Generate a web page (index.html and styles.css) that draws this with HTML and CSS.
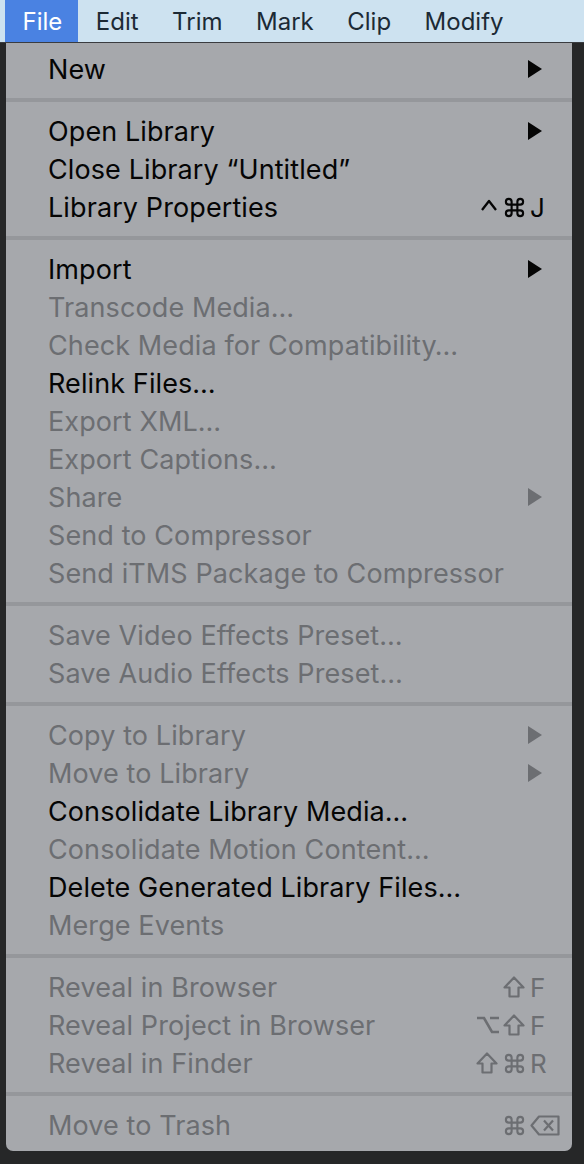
FILE: index.html
```html
<!DOCTYPE html>
<html>
<head>
<meta charset="utf-8">
<link rel="stylesheet" href="styles.css">
</head>
<body>
<div class="menubar">
  <span class="mb-item active">File</span>
  <span class="mb-item">Edit</span>
  <span class="mb-item">Trim</span>
  <span class="mb-item">Mark</span>
  <span class="mb-item">Clip</span>
  <span class="mb-item">Modify</span>
</div>
<div class="stage">
  <div class="menu">
    <div class="row"><span class="label">New</span><span class="sub"></span></div>
    <div class="sep"></div>
    <div class="row"><span class="label">Open Library</span><span class="sub"></span></div>
    <div class="row"><span class="label">Close Library “Untitled”</span></div>
    <div class="row"><span class="label">Library Properties</span>
      <span class="keys">
        <span class="k"><svg class="ic ctl" viewBox="0 0 18 14"><path d="M2 12 L9 3 L16 12"/></svg></span>
        <span class="k"><svg class="ic cmd" viewBox="0 0 24 24"><path d="M15 6v12a3 3 0 1 0 3-3H6a3 3 0 1 0 3 3V6a3 3 0 1 0-3 3h12a3 3 0 1 0-3-3"/></svg></span>
        <span class="k letter">J</span>
      </span>
    </div>
    <div class="sep"></div>
    <div class="row"><span class="label">Import</span><span class="sub"></span></div>
    <div class="row off"><span class="label">Transcode Media…</span></div>
    <div class="row off"><span class="label">Check Media for Compatibility…</span></div>
    <div class="row"><span class="label">Relink Files…</span></div>
    <div class="row off"><span class="label">Export XML…</span></div>
    <div class="row off"><span class="label">Export Captions…</span></div>
    <div class="row off"><span class="label">Share</span><span class="sub"></span></div>
    <div class="row off"><span class="label">Send to Compressor</span></div>
    <div class="row off"><span class="label">Send iTMS Package to Compressor</span></div>
    <div class="sep"></div>
    <div class="row off"><span class="label">Save Video Effects Preset…</span></div>
    <div class="row off"><span class="label">Save Audio Effects Preset…</span></div>
    <div class="sep"></div>
    <div class="row off"><span class="label">Copy to Library</span><span class="sub"></span></div>
    <div class="row off"><span class="label">Move to Library</span><span class="sub"></span></div>
    <div class="row"><span class="label">Consolidate Library Media…</span></div>
    <div class="row off"><span class="label">Consolidate Motion Content…</span></div>
    <div class="row"><span class="label">Delete Generated Library Files…</span></div>
    <div class="row off"><span class="label">Merge Events</span></div>
    <div class="sep"></div>
    <div class="row off"><span class="label">Reveal in Browser</span>
      <span class="keys">
        <span class="k"><svg class="ic shift" viewBox="0 0 22 22"><path d="M11 1.5 L20.5 11.5 H15.5 V20.5 H6.5 V11.5 H1.5 Z"/></svg></span>
        <span class="k letter">F</span>
      </span>
    </div>
    <div class="row off"><span class="label">Reveal Project in Browser</span>
      <span class="keys">
        <span class="k"><svg class="ic opt" viewBox="0 0 24 20"><path d="M1 3 H8 L16 17 H23 M14 3 H23"/></svg></span>
        <span class="k"><svg class="ic shift" viewBox="0 0 22 22"><path d="M11 1.5 L20.5 11.5 H15.5 V20.5 H6.5 V11.5 H1.5 Z"/></svg></span>
        <span class="k letter">F</span>
      </span>
    </div>
    <div class="row off"><span class="label">Reveal in Finder</span>
      <span class="keys">
        <span class="k"><svg class="ic shift" viewBox="0 0 22 22"><path d="M11 1.5 L20.5 11.5 H15.5 V20.5 H6.5 V11.5 H1.5 Z"/></svg></span>
        <span class="k"><svg class="ic cmd" viewBox="0 0 24 24"><path d="M15 6v12a3 3 0 1 0 3-3H6a3 3 0 1 0 3 3V6a3 3 0 1 0-3 3h12a3 3 0 1 0-3-3"/></svg></span>
        <span class="k letter">R</span>
      </span>
    </div>
    <div class="sep"></div>
    <div class="row off"><span class="label">Move to Trash</span>
      <span class="keys">
        <span class="k"><svg class="ic cmd" viewBox="0 0 24 24"><path d="M15 6v12a3 3 0 1 0 3-3H6a3 3 0 1 0 3 3V6a3 3 0 1 0-3 3h12a3 3 0 1 0-3-3"/></svg></span>
        <span class="k letter"><svg class="ic del" viewBox="0 0 30 21"><path d="M9 1.5 H28.5 V19.5 H9 L1.5 10.5 Z M14 5.5 L23 15.5 M23 5.5 L14 15.5"/></svg></span>
      </span>
    </div>
  </div>
</div>
</body>
</html>
```
FILE: styles.css
```css
html, body {
  margin: 0;
  padding: 0;
}
body {
  background: #262728;
  width: 584px;
  height: 1164px;
  overflow: hidden;
  font-family: Inter, "Liberation Sans", sans-serif;
}
.menubar {
  height: 42px;
  background: #cde2f0;
  display: flex;
  align-items: stretch;
  padding-left: 5px;
  border-bottom: 1px solid #3a3c40;
}
.mb-item {
  display: flex;
  align-items: center;
  font-size: 24px;
  color: #1c2a35;
  padding: 0 16px 0 17.5px;
}
.mb-item.active {
  background: #4a82e2;
  color: #ffffff;
  padding: 0 16px 0 17.5px;
}
.stage {
  padding-left: 6px;
}
.menu {
  width: 566px;
  background: #a6a8ac;
  border-radius: 0 0 7px 7px;
  padding: 7px 0 7px;
  box-sizing: border-box;
}
.row {
  height: 38px;
  display: flex;
  align-items: center;
  justify-content: space-between;
  padding: 0 12px 0 42px;
  font-size: 27px;
  letter-spacing: 0.1px;
  color: #050505;
  white-space: nowrap;
}
.row.off {
  color: #6c6e72;
}
.sub {
  width: 0;
  height: 0;
  border-left: 14px solid #050505;
  border-top: 9px solid transparent;
  border-bottom: 9px solid transparent;
  margin-right: 18px;
}
.row.off .sub {
  border-left-color: #6c6e72;
}
.keys {
  display: flex;
  align-items: center;
  height: 38px;
}
.k {
  width: 27px;
  display: flex;
  align-items: center;
  justify-content: flex-start;
}
.k.letter {
  width: 30px;
  font-size: 26px;
}
.ic {
  fill: none;
  stroke: currentColor;
  stroke-width: 2.3;
  stroke-linejoin: round;
  display: block;
}
.ic.ctl {
  width: 18px;
  height: 14px;
  margin: 0 0 4px 4px;
}
.ic.cmd {
  width: 23px;
  height: 23px;
  stroke-width: 2.2;
}
.ic.shift {
  width: 22px;
  height: 22px;
  stroke-width: 2.2;
}
.ic.opt {
  width: 24px;
  height: 20px;
  stroke-width: 2.6;
  stroke-linejoin: miter;
}
.ic.del {
  width: 30px;
  height: 21px;
  stroke-width: 2.2;
}
.sep {
  height: 24px;
  display: flex;
  align-items: center;
}
.sep::before {
  content: "";
  display: block;
  width: 100%;
  height: 4px;
  background: #95979b;
}
```
